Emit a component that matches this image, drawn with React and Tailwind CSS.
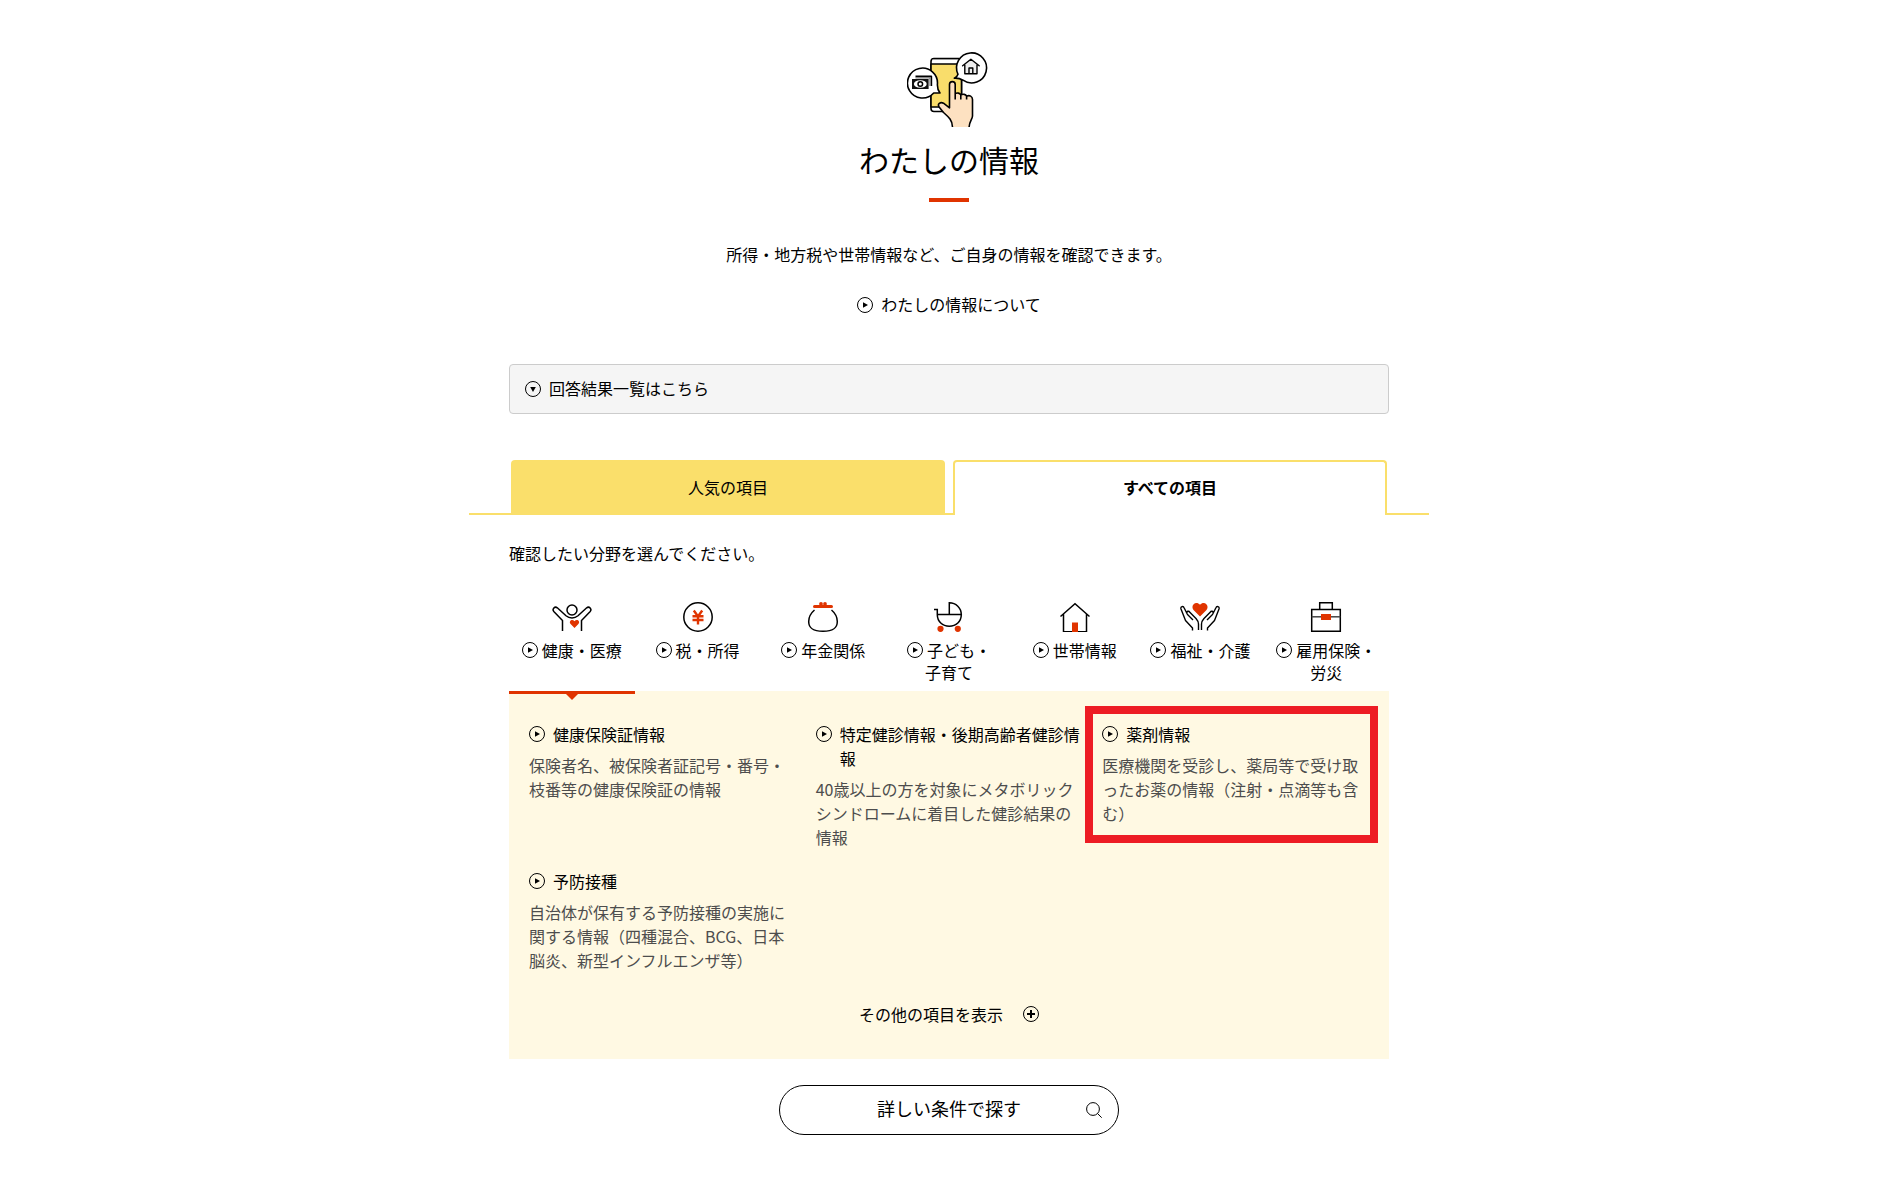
import React, { useState } from 'react';

const categories = [
    { id: 'health', lines: ['健康・医療'], icon: HealthIcon },
    { id: 'tax', lines: ['税・所得'], icon: TaxIcon },
    { id: 'pension', lines: ['年金関係'], icon: PensionIcon },
    { id: 'child', lines: ['子ども・', '子育て'], icon: ChildIcon },
    { id: 'household', lines: ['世帯情報'], icon: HouseholdIcon },
    { id: 'welfare', lines: ['福祉・介護'], icon: WelfareIcon },
    { id: 'employment', lines: ['雇用保険・', '労災'], icon: EmploymentIcon },
];

const items = [
    {
        title: '健康保険証情報',
        text: '保険者名、被保険者証記号・番号・枝番等の健康保険証の情報',
    },
    {
        title: '特定健診情報・後期高齢者健診情報',
        text: '40歳以上の方を対象にメタボリックシンドロームに着目した健診結果の情報',
    },
    {
        title: '薬剤情報',
        text: '医療機関を受診し、薬局等で受け取ったお薬の情報（注射・点滴等も含む）',
        highlighted: true,
    },
    {
        title: '予防接種',
        text: '自治体が保有する予防接種の実施に関する情報（四種混合、BCG、日本脳炎、新型インフルエンザ等）',
    },
];

function ArrowIcon({ className = '' }) {
    return (
        <svg viewBox="0 0 16 16" className={`size-4 shrink-0 ${className}`} aria-hidden="true">
            <circle cx="8" cy="8" r="7.5" fill="none" stroke="#000" />
            <path d="M6 5.2 11 8 6 10.8Z" fill="#000" />
        </svg>
    );
}

function PlusIcon() {
    return (
        <svg viewBox="0 0 16 16" className="size-4 shrink-0" aria-hidden="true">
            <circle cx="8" cy="8" r="7.5" fill="none" stroke="#000" />
            <path d="M8 4v8M4 8h8" stroke="#000" strokeWidth="2" />
        </svg>
    );
}

function SearchIcon() {
    return (
        <svg viewBox="0 0 16 16" className="size-4" fill="none" stroke="#000" aria-hidden="true">
            <circle cx="7" cy="7" r="6.4" />
            <path d="M11.5 11.5 15.7 15.7" />
        </svg>
    );
}

function HeroIcon() {
    return (
        <svg viewBox="0 0 84 77" className="h-[77px] w-[84px]" fill="none" stroke="#000" strokeWidth="1.6" strokeLinejoin="round" strokeLinecap="round" aria-hidden="true">
            {/* Phone */}
            <rect x="24" y="8.5" width="30.5" height="53" rx="3" fill="#fff" />
            <path d="M24 14h30.5v43H24z" fill="#f9dd6b" />
            <path d="M26 9.5h26" stroke="#999" strokeWidth="1" />

            {/* Money bubble */}
            <path d="M26.7 43A15 15 0 1 1 30.4 34.5C30.3 38 31 40.6 33 43Z" fill="#fff" />
            <path d="M8.5 26.4H24.4V36" strokeLinecap="butt" />
            <path d="M8.5 27.8H23V36" stroke="#777" strokeWidth="1.2" strokeLinecap="butt" />
            <rect x="5" y="29" width="16.6" height="10" fill="#111" stroke="none" />
            <ellipse cx="13.3" cy="34" rx="6.4" ry="3.8" fill="#fff" stroke="none" />
            <circle cx="13.3" cy="34" r="2.3" fill="#fff" strokeWidth="1.5" />

            {/* House bubble */}
            <path d="M51 24.3A15 15 0 1 1 56 30.2C53.5 28.7 50.5 28 47.3 28.2 49.5 27.2 50.5 26 51 24.3Z" fill="#fff" />
            <path d="M57.8 14.5 63.9 9.8 70 14.5V23.5H57.8Z" fill="#eee" stroke="none" />
            <path d="M55.6 15.8 63.9 9.2 72.2 15.8M57.8 14.8V23.7H70V14.8M62 23.5V18h3.8v5.5" strokeWidth="1.4" />

            {/* Hand */}
            <path d="M45.5 77C45.5 70 41 66.5 36.5 62.5L32.3 57.2C29.8 53.8 33.5 51.7 36.5 53.2L42.5 57.8V34.5C42.5 30.6 48.2 30.6 48.2 34.5V43.5C50 42.5 53 43 53.8 45 56 43.6 58.8 44.3 59.6 46.2 62.5 44.8 65.5 46.3 65.5 49.5V66C65.5 69 62.3 71.5 62.1 77Z" fill="#fde1c1" stroke="none" />
            <path d="M45.5 77C45.5 70 41 66.5 36.5 62.5L32.3 57.2C29.8 53.8 33.5 51.7 36.5 53.2L42.5 57.8V34.5C42.5 30.6 48.2 30.6 48.2 34.5V49.5M48.2 43.5C50 42.5 53 43 53.8 45V49.5M53.8 45C56 43.6 58.8 44.3 59.6 46.2V49.5M59.6 46.2C62.5 44.8 65.5 46.3 65.5 49.5V66C65.5 69 62.3 71.5 62.1 77" strokeLinecap="butt" />
        </svg>
    );
}

function HealthIcon() {
    return (
        <svg viewBox="0 0 40 30" className="h-[30px] w-10" fill="none" stroke="#000" strokeWidth="1.5" aria-hidden="true">
            <circle cx="20" cy="8" r="5" />
            <path d="M10.5 29V18.5L1.8 9.5C-.2 7.3 2.8 3.8 5.3 5.8L14 13.8C17.5 16.8 22.5 16.8 26 13.8L34.7 5.8C37.2 3.8 40.2 7.3 38.2 9.5L29.5 18.5V29" />
            <path d="M22.5 26 18.6 22.1C16.3 19.5 20 16.3 22.5 19.2 25 16.3 28.7 19.5 26.4 22.1Z" fill="#e03400" stroke="none" />
        </svg>
    );
}

function TaxIcon() {
    return (
        <svg viewBox="0 0 40 30" className="h-[30px] w-10" fill="none" stroke="#000" strokeWidth="1.5" aria-hidden="true">
            <circle cx="20" cy="15" r="14.2" />
            <path d="M15.8 8.5 20 14.5 24.2 8.5M20 14.5V22.5M14.5 14.3H25.5M14.5 18H25.5" stroke="#e03400" strokeWidth="2.4" />
        </svg>
    );
}

function PensionIcon() {
    return (
        <svg viewBox="0 0 40 30" className="h-[30px] w-10" fill="none" stroke="#000" strokeWidth="1.5" aria-hidden="true">
            <path d="M11.5 8C8 11 5.7 14.5 5.7 19.5 5.7 26 9.5 29.2 20 29.2S34.3 26 34.3 19.5C34.3 14.5 32 11 28.5 8" />
            <path d="M11.5 4.5H28.5" stroke="#e03400" strokeWidth="3" strokeLinecap="round" />
            <circle cx="18" cy="2" r="1.9" fill="#e03400" stroke="none" />
            <circle cx="22" cy="2" r="1.9" fill="#e03400" stroke="none" />
        </svg>
    );
}

function ChildIcon() {
    return (
        <svg viewBox="0 0 40 30" className="h-[30px] w-10" fill="none" stroke="#000" strokeWidth="1.5" aria-hidden="true">
            <path d="M5 7.5H8.3V12.5H32.3C32.3 6 27 .8 20.3.8V12.5M8.3 12.5C8.3 19.5 13.5 24.3 20.3 24.3S32.3 19.5 32.3 12.5" />
            <circle cx="11.5" cy="26.8" r="3.1" fill="#e03400" stroke="none" />
            <circle cx="28.8" cy="26.8" r="3.1" fill="#e03400" stroke="none" />
        </svg>
    );
}

function HouseholdIcon() {
    return (
        <svg viewBox="0 0 40 30" className="h-[30px] w-10" fill="none" stroke="#000" strokeWidth="1.5" aria-hidden="true">
            <path d="M5.5 14.5 20 1.8 34.5 14.5M8.5 12V29.8H31.5V12" />
            <path d="M17 20.5h6v10h-6z" fill="#e03400" stroke="none" />
        </svg>
    );
}

function WelfareIcon() {
    return (
        <svg viewBox="0 0 40 30" className="h-[30px] w-10" fill="none" stroke="#000" strokeWidth="1.4" strokeLinejoin="round" aria-hidden="true">
            <path d="M20 14.5 13.5 8C10 3.5 16-2 20 2.8 24-2 30 3.5 26.5 8Z" fill="#e03400" stroke="none" />
            <path d="M12.500 28.500V26L5.500 18.500 1 7C.3 4.300 3.300 3.500 4.200 6L7.500 12.500 13 18M7 11.500C6.300 9 8.800 8.500 9.800 10.300L16 16.500C17.800 18.500 18.500 20 18.500 22V28" />
            <path d="M27.500 28.500V26L34.500 18.500 39 7C39.700 4.300 36.700 3.500 35.800 6L32.500 12.500 27 18M33 11.500C33.700 9 31.200 8.500 30.200 10.300L24 16.500C22.200 18.500 21.500 20 21.500 22V28" />
        </svg>
    );
}

function EmploymentIcon() {
    return (
        <svg viewBox="0 0 40 30" className="h-[30px] w-10" fill="none" stroke="#000" strokeWidth="1.5" aria-hidden="true">
            <path d="M5.7 7.5H34.3V29.2H5.7ZM13.7 7.5V.8H26.3V7.5" />
            <path d="M5.7 14.8H34.3" stroke="#444" />
            <path d="M15 12h10v6H15z" fill="#e03400" stroke="none" />
        </svg>
    );
}

function Tab({ selected, onClick, children }) {
    return (
        <button
            type="button"
            role="tab"
            aria-selected={selected}
            onClick={onClick}
            className={`flex-1 rounded-t border-x-2 border-t-2 border-[#fadf6b] pb-1 ${selected ? 'font-bold' : 'bg-[#fadf6b]'}`}
        >
            {children}
        </button>
    );
}

export default function App() {
    const [tab, setTab] = useState('all');
    const [category, setCategory] = useState('health');

    return (
        <main className="bg-white pt-[50px] pb-10 text-base leading-6 text-black font-['Noto_Sans_CJK_JP',sans-serif]">
            <div className="mx-auto max-w-[960px]">
                {/* Page heading */}
                <header className="flex flex-col items-center px-10">
                    <HeroIcon />
                    <h1 className="mt-3 text-3xl leading-10">わたしの情報</h1>
                    <div className="mt-[19px] h-1 w-10 bg-[#e03400]" />
                    <p className="mt-10">所得・地方税や世帯情報など、ご自身の情報を確認できます。</p>
                    <a href="#about" className="mt-[26px] flex items-center gap-2">
                        <ArrowIcon className="mt-0.5" />
                        わたしの情報について
                    </a>
                </header>

                <div className="mt-12 px-10">
                    <button type="button" className="flex w-full items-center gap-2 rounded border border-[#ccc] bg-[#f5f5f5] px-[15px] pt-[11px] pb-[13px] text-left">
                        <ArrowIcon className="mt-0.5 rotate-90" />
                        回答結果一覧はこちら
                    </button>
                </div>

                {/* Tabs */}
                <div role="tablist" className="mt-[46px] flex h-[55px]">
                    <div className="w-[42px] border-b-2 border-[#fadf6b]" />
                    <Tab selected={tab === 'popular'} onClick={() => setTab('popular')}>人気の項目</Tab>
                    <div className="w-2 border-b-2 border-[#fadf6b]" />
                    <Tab selected={tab === 'all'} onClick={() => setTab('all')}>すべての項目</Tab>
                    <div className="w-[42px] border-b-2 border-[#fadf6b]" />
                </div>

                <section className="mt-[26px] px-10">
                    <p>確認したい分野を選んでください。</p>

                    {/* Categories */}
                    <ul className="mt-[37px] grid grid-cols-7">
                        {categories.map(({ id, lines, icon: Icon }) => (
                            <li key={id} className="relative">
                                <button type="button" onClick={() => setCategory(id)} className="flex h-full w-full flex-col items-center pb-2">
                                    <Icon />
                                    <span className="mt-[7px] flex items-center gap-1 leading-[22px]">
                                        <ArrowIcon />
                                        {lines[0]}
                                    </span>
                                    {lines[1] && <span className="leading-[22px]">{lines[1]}</span>}
                                </button>
                                {category === id && (
                                    <div className="absolute top-full left-0 flex w-full flex-col items-center">
                                        <div className="h-[3px] w-full bg-[#e03400]" />
                                        <svg viewBox="0 0 12 6" className="h-1.5 w-3" aria-hidden="true">
                                            <path d="M0 0h12L6 6Z" fill="#e03400" />
                                        </svg>
                                    </div>
                                )}
                            </li>
                        ))}
                    </ul>

                    {/* Items of the selected category */}
                    <div className="bg-[#fff9e3] px-5 pt-[31px] pb-[33px]">
                        <ul className="grid grid-cols-3 gap-5">
                            {items.map(item => (
                                <li key={item.title}>
                                    <div className="relative">
                                        <a href="#item" className="flex items-start gap-2">
                                            <ArrowIcon className="mt-1" />
                                            {item.title}
                                        </a>
                                        <p className="mt-[7px] text-[#4d4d4d]">{item.text}</p>
                                        {item.highlighted && (
                                            <div className="pointer-events-none absolute -top-4 -right-[9px] -bottom-[18px] -left-[17px] border-8 border-[#ed1c24]" />
                                        )}
                                    </div>
                                </li>
                            ))}
                        </ul>
                        <button type="button" className="mx-auto mt-[30px] flex items-center gap-5">
                            その他の項目を表示
                            <PlusIcon />
                        </button>
                    </div>
                </section>

                <button type="button" className="relative mx-auto mt-[26px] block h-[50px] w-[340px] rounded-full border border-black pb-1 text-lg">
                    詳しい条件で探す
                    <span className="absolute top-4 right-4">
                        <SearchIcon />
                    </span>
                </button>
            </div>
        </main>
    );
}
